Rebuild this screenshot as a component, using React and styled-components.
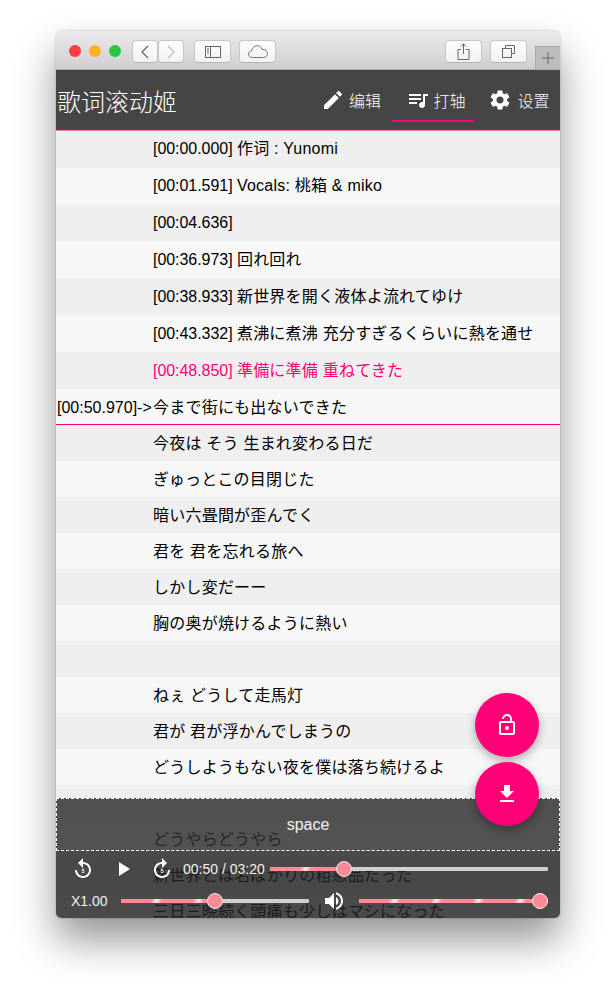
import { createGlobalStyle } from "styled-components";
import styled from "styled-components";
import {
  MdEdit,
  MdSettings,
  MdQueueMusic,
  MdLockOpen,
  MdFileDownload,
  MdReplay5,
  MdForward5,
  MdPlayArrow,
  MdVolumeUp,
} from "react-icons/md";

const GlobalStyle = createGlobalStyle`
  html, body {
    margin: 0;
    background: #fff;
  }
  body {
    font-family: "Liberation Sans", "Noto Sans CJK JP", sans-serif;
    width: 616px;
    height: 999px;
    overflow: hidden;
  }
`;

const Page = styled.div`
  padding: 31px 56px 0;
`;

const Window = styled.div`
  position: relative;
  width: 504px;
  height: 887px;
  border-radius: 5px;
  overflow: hidden;
  display: flex;
  flex-direction: column;
`;

const Shadow = styled.div`
  width: 504px;
  border-radius: 5px;
  box-shadow: 0 22px 40px rgba(0, 0, 0, 0.42), 0 0 2px rgba(0, 0, 0, 0.3);
`;

const TitleBar = styled.div`
  height: 39px;
  flex: none;
  display: flex;
  box-sizing: border-box;
  padding: 9px 0 0 13px;
  background: linear-gradient(#ebe9eb, #d0ced0);
  border-bottom: 1px solid #b1afb1;
`;

const Light = styled.span`
  width: 12px;
  height: 12px;
  border-radius: 50%;
  margin: 5px 8px 0 0;
  background: ${(props) => props.$color};
`;

const ChromeButton = styled.button`
  width: ${(props) => props.$width || 37}px;
  height: 23px;
  margin-left: ${(props) => props.$gap || 0}px;
  padding: 0;
  display: flex;
  align-items: center;
  justify-content: center;
  background: linear-gradient(#fdfdfd, #f2f2f2);
  border: 1px solid #c8c6c8;
  border-bottom-color: #b5b3b5;
  border-radius: 4px;
`;

const PlusTab = styled.div`
  margin-left: 8px;
  margin-top: 6px;
  flex: 1;
  height: 23px;
  box-sizing: border-box;
  background: #bdbbbd;
  border: 1px solid #a9a7a9;
  border-right: 0;
  border-bottom: 0;
  display: flex;
  align-items: center;
  justify-content: center;
`;

const Header = styled.header`
  height: 61px;
  flex: none;
  display: flex;
  align-items: center;
  justify-content: space-between;
  box-sizing: border-box;
  background: #454545;
  border-bottom: 1px solid #ff7a8f;
`;

const Title = styled.h1`
  margin: 0 0 0 1px;
  font-family: "Noto Sans CJK SC", sans-serif;
  font-size: 24px;
  font-weight: 300;
  color: #fff;
`;

const Tabs = styled.nav`
  display: flex;
  height: 100%;
`;

const Tab = styled.div`
  position: relative;
  box-sizing: border-box;
  width: ${(props) => props.$width}px;
  padding-left: ${(props) => props.$inset || 0}px;
  display: flex;
  align-items: center;
  justify-content: center;
  gap: ${(props) => props.$gap}px;
  font-family: "Noto Sans CJK SC", sans-serif;
  font-size: 16px;
  font-weight: 300;
  color: #fff;
  svg {
    width: 24px;
    height: 24px;
    flex: none;
  }
  &::after {
    content: "";
    display: ${(props) => (props.$active ? "block" : "none")};
    position: absolute;
    left: 0;
    right: 0;
    bottom: 8px;
    height: 2px;
    background: #ff0077;
  }
`;

const LyricList = styled.div`
  flex: 1;
  overflow: hidden;
  background: #f7f7f7;
`;

const Row = styled.div`
  display: flex;
  align-items: center;
  height: ${(props) => props.$height}px;
  box-sizing: border-box;
  padding: ${(props) => props.$drop}px 0 0 1px;
  font-size: 16px;
  line-height: 20px;
  color: ${(props) => (props.$current ? "#ff0077" : "#000")};
  background: ${(props) => (props.$odd ? "#f7f7f7" : "#efefef")};
  border-bottom: ${(props) => (props.$next ? "1px solid #ff0077" : "0")};
  white-space: pre;
`;

const Prefix = styled.span`
  width: 96px;
  flex: none;
`;

const Stamp = styled.span`
  letter-spacing: -0.05px;
`;

const LyricText = styled.span`
  letter-spacing: 0.22px;
`;

const Fab = styled.button`
  position: absolute;
  right: 21px;
  top: ${(props) => props.$top}px;
  z-index: 3;
  width: 64px;
  height: 64px;
  padding: 0;
  border: 0;
  border-radius: 50%;
  display: flex;
  align-items: center;
  justify-content: center;
  background: #ff0077;
  color: #fff;
  box-shadow: 0 4px 10px rgba(0, 0, 0, 0.3);
  svg {
    width: 24px;
    height: 24px;
  }
`;

const Dock = styled.div`
  position: absolute;
  left: 0;
  right: 0;
  bottom: 0;
  z-index: 2;
  color: #f2f2f2;
`;

const SpaceBar = styled.div`
  height: 53px;
  box-sizing: border-box;
  border: 1px dashed #fff;
  background: rgba(45, 45, 45, 0.82);
  display: flex;
  align-items: center;
  justify-content: center;
  font-size: 16px;
`;

const Player = styled.div`
  height: 67px;
  box-sizing: border-box;
  padding: 2px 12px 0 15px;
  background: rgba(35, 35, 35, 0.82);
`;

const PlayerRow = styled.div`
  display: flex;
  align-items: center;
  height: 32px;
`;

const IconButton = styled.span`
  width: 24px;
  height: 24px;
  flex: none;
  margin-left: ${(props) => props.$before || 0}px;
  margin-right: ${(props) => props.$gap || 0}px;
  display: flex;
  color: #fff;
  svg {
    width: 100%;
    height: 100%;
  }
`;

const TimeText = styled.span`
  width: 87px;
  flex: none;
  font-size: 14px;
  white-space: nowrap;
`;

const SpeedText = styled.span`
  width: 50px;
  flex: none;
  font-size: 14px;
`;

const Track = styled.div`
  position: relative;
  width: ${(props) => props.$width}px;
  flex: none;
  margin-left: ${(props) => props.$left || 0}px;
  height: 4px;
  border-radius: 1px;
  background: #cfcfcf;
`;

const Fill = styled.div`
  height: 100%;
  background: repeating-linear-gradient(
    115deg,
    #ff8a95 0 28px,
    #ffeef0 33px,
    #ff8a95 38px
  );
`;

const Thumb = styled.div`
  position: absolute;
  top: -6px;
  width: 16px;
  height: 16px;
  margin-left: -8px;
  box-sizing: border-box;
  border-radius: 50%;
  border: 1px solid #eee;
  background: #ff8a95;
`;

const Slider = ({ width, left, value }) => (
  <Track $width={width} $left={left}>
    <Fill style={{ width: `${value}%` }} />
    <Thumb style={{ left: `${value}%` }} />
  </Track>
);

const lines = [
  { stamp: "[00:00.000] ", text: "作词 : Yunomi" },
  { stamp: "[00:01.591] ", text: "Vocals: 桃箱 & miko" },
  { stamp: "[00:04.636]", text: "" },
  { stamp: "[00:36.973] ", text: "回れ回れ" },
  { stamp: "[00:38.933] ", text: "新世界を開く液体よ流れてゆけ" },
  { stamp: "[00:43.332] ", text: "煮沸に煮沸 充分すぎるくらいに熱を通せ" },
  { stamp: "[00:48.850] ", text: "準備に準備 重ねてきた" },
  { prefix: "[00:50.970]->", text: "今まで街にも出ないできた" },
  { text: "今夜は そう 生まれ変わる日だ" },
  { text: "ぎゅっとこの目閉じた" },
  { text: "暗い六畳間が歪んでく" },
  { text: "君を 君を忘れる旅へ" },
  { text: "しかし変だーー" },
  { text: "胸の奥が焼けるように熱い" },
  { text: "" },
  { text: "ねぇ どうして走馬灯" },
  { text: "君が 君が浮かんでしまうの" },
  { text: "どうしようもない夜を僕は落ち続けるよ" },
  { text: "" },
  { text: "どうやらどうやら" },
  { text: "新世界とは名ばかりの粗悪品だった" },
  { text: "三日三晩続く頭痛も少しはマシになった" },
];

const BackIcon = ({ flip, color }) => (
  <svg width="10" height="14" viewBox="0 0 10 14" fill="none" stroke={color} strokeWidth="1.3">
    <path d={flip ? "M2 1l6 6-6 6" : "M8 1L2 7l6 6"} />
  </svg>
);

const SidebarIcon = () => (
  <svg width="16" height="12" viewBox="0 0 16 12" fill="none" stroke="#666">
    <rect x="0.5" y="0.5" width="15" height="11" />
    <path d="M5.5 0.5v11M2 3h2M2 5h2M2 7h2" />
  </svg>
);

const CloudIcon = () => (
  <svg width="20" height="13" viewBox="0 0 20 13" fill="none" stroke="#777">
    <path d="M4.5 12.5C2 12.5.5 11 .5 9.2c0-1.7 1.2-3 3-3.2C4 3 6.2.7 9 .7c2.5 0 4.4 1.5 5 3.7 2.9-.3 5.5 1.5 5.5 4.2 0 2.3-1.8 3.9-4 3.9z" />
  </svg>
);

const ShareIcon = () => (
  <svg width="13" height="17" viewBox="0 0 13 17" fill="none" stroke="#666">
    <path d="M4 6.5H1v10h11v-10H9M6.5 11V1M3.8 3.5L6.5.8l2.7 2.7" />
  </svg>
);

const CopyIcon = () => (
  <svg width="13" height="13" viewBox="0 0 13 13" fill="none" stroke="#666">
    <path d="M3.5 3V.5h9v8H10" />
    <rect x="0.5" y="3.5" width="9" height="9" />
  </svg>
);

const PlusIcon = () => (
  <svg width="12" height="12" viewBox="0 0 12 12" fill="none" stroke="#666">
    <path d="M6 0v12M0 6h12" />
  </svg>
);

const rowDrop = (i) => {
  if (i === 7) return 4;
  return i >= 5 ? 2 : 0;
};

export default function App() {
  return (
    <Page>
      <GlobalStyle />
      <Shadow>
        <Window>
          <TitleBar>
            <Light $color="#fc3d47" />
            <Light $color="#fdb324" />
            <Light $color="#28c940" />
            <ChromeButton $width={26} $gap={3}>
              <BackIcon color="#666" />
            </ChromeButton>
            <ChromeButton $width={26}>
              <BackIcon flip color="#c0c0c0" />
            </ChromeButton>
            <ChromeButton $gap={10}>
              <SidebarIcon />
            </ChromeButton>
            <ChromeButton $gap={8}>
              <CloudIcon />
            </ChromeButton>
            <ChromeButton $gap={169}>
              <ShareIcon />
            </ChromeButton>
            <ChromeButton $gap={8}>
              <CopyIcon />
            </ChromeButton>
            <PlusTab>
              <PlusIcon />
            </PlusTab>
          </TitleBar>
          <Header>
            <Title>歌词滚动姬</Title>
            <Tabs>
              <Tab $width={82} $gap={4}>
                <MdEdit />
                编辑
              </Tab>
              <Tab $width={82} $gap={3} $inset={6} $active>
                <MdQueueMusic />
                打轴
              </Tab>
              <Tab $width={86} $gap={5} $inset={4}>
                <MdSettings />
                设置
              </Tab>
            </Tabs>
          </Header>
          <LyricList>
            {lines.map((line, i) => (
              <Row
                key={i}
                $height={i < 8 ? 36.8 : 36}
                $drop={rowDrop(i)}
                $odd={i % 2 === 1}
                $current={i === 6}
                $next={i === 7}
              >
                <Prefix>{line.prefix}</Prefix>
                {line.stamp && <Stamp>{line.stamp}</Stamp>}
                <LyricText>{line.text}</LyricText>
              </Row>
            ))}
          </LyricList>
          <Fab $top={662}>
            <MdLockOpen />
          </Fab>
          <Fab $top={731}>
            <MdFileDownload />
          </Fab>
          <Dock>
            <SpaceBar>space</SpaceBar>
            <Player>
              <PlayerRow>
                <IconButton $gap={16}>
                  <MdReplay5 />
                </IconButton>
                <IconButton $gap={15}>
                  <MdPlayArrow />
                </IconButton>
                <IconButton $gap={9}>
                  <MdForward5 />
                </IconButton>
                <TimeText>00:50 / 03:20</TimeText>
                <Slider width={278} value={26.5} />
              </PlayerRow>
              <PlayerRow>
                <SpeedText>X1.00</SpeedText>
                <Slider width={188} value={50} />
                <IconButton $before={13}>
                  <MdVolumeUp />
                </IconButton>
                <Slider width={189} left={13} value={96} />
              </PlayerRow>
            </Player>
          </Dock>
        </Window>
      </Shadow>
    </Page>
  );
}
